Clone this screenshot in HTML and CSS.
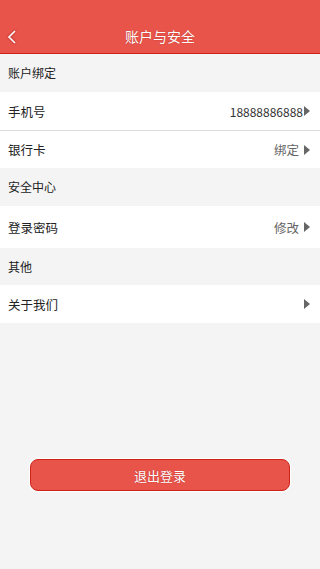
FILE: index.html
```html
<!DOCTYPE html>
<html lang="zh-CN">
<head>
    <meta charset="UTF-8">
    <meta name="viewport" content="width=device-width, initial-scale=1.0">
    <title>账户与安全</title>
    <link rel="stylesheet" href="styles.css">
</head>
<body>
    <header class="top-bar">
        <a class="back" href="#">
            <svg width="10" height="14" viewBox="0 0 10 14">
                <path d="M8 1 L2 7 L8 13" fill="none" stroke="#fff" stroke-width="1.6"/>
            </svg>
        </a>
        <h1 class="title">账户与安全</h1>
    </header>

    <div class="group-title">账户绑定</div>
    <div class="list">
        <a class="row" href="#">
            <span class="label">手机号</span>
            <span class="value dark">18888886888</span>
            <span class="arrow"></span>
        </a>
        <a class="row" href="#">
            <span class="label">银行卡</span>
            <span class="value">绑定</span>
            <span class="arrow"></span>
        </a>
    </div>

    <div class="group-title">安全中心</div>
    <div class="list">
        <a class="row row-tall" href="#">
            <span class="label">登录密码</span>
            <span class="value">修改</span>
            <span class="arrow"></span>
        </a>
    </div>

    <div class="group-title group-short">其他</div>
    <div class="list">
        <a class="row" href="#">
            <span class="label">关于我们</span>
            <span class="arrow"></span>
        </a>
    </div>

    <div class="logout-wrap">
        <button class="logout">退出登录</button>
    </div>
</body>
</html>
```

FILE: styles.css
```css
:root {
    --red: #e8534a;
    --red-dark: #cc2219;
    --bg: #f4f4f4;
    --text: #222;
    --muted: #666;
}

* {
    margin: 0;
    padding: 0;
    box-sizing: border-box;
}

body {
    font-family: "Noto Sans CJK SC", "Noto Sans", sans-serif;
    background-color: var(--bg);
    color: var(--text);
    min-height: 100vh;
}

.top-bar {
    height: 54px;
    background-color: var(--red);
    border-bottom: 1.5px solid var(--red-dark);
    display: flex;
    align-items: flex-end;
    justify-content: center;
    padding-bottom: 6px;
    position: relative;
}

.back {
    position: absolute;
    left: 7px;
    bottom: 9px;
    display: flex;
    filter: drop-shadow(0 0 1px rgba(120,0,0,0.6));
}

.title {
    font-size: 14px;
    font-weight: normal;
    color: #fff;
    line-height: 22px;
    text-shadow: 0 0 1px rgba(120,0,0,0.5);
}

.group-title {
    height: 38px;
    line-height: 38px;
    padding-left: 8px;
    font-size: 12px;
    color: var(--text);
}

.group-short {
    height: 37px;
    line-height: 37px;
}

.list {
    background-color: #fff;
}

.row {
    display: flex;
    align-items: center;
    height: 38px;
    padding: 0 9px 0 8px;
    text-decoration: none;
    color: var(--text);
    font-size: 12.5px;
}

.row + .row {
    border-top: 1px solid #dcdcdc;
}

.row-tall {
    height: 42px;
}

.label {
    flex: 1;
}

.value {
    color: var(--muted);
    font-size: 12.5px;
    margin-right: 5px;
}

.value.dark {
    color: #333;
    font-size: 12px;
    margin-right: 1px;
}

.arrow {
    width: 0;
    height: 0;
    border-top: 5px solid transparent;
    border-bottom: 5px solid transparent;
    border-left: 6px solid #666;
    margin-right: 1px;
}

.logout-wrap {
    padding: 136px 30px 0;
}

.logout {
    width: 100%;
    height: 32px;
    border: 1px solid var(--red-dark);
    border-radius: 8px;
    background-color: var(--red);
    color: #fff;
    font-family: inherit;
    font-size: 13px;
    box-shadow: 0 0 0 1px #fff;
    text-shadow: 0 0 1px rgba(120,0,0,0.5);
}
```
